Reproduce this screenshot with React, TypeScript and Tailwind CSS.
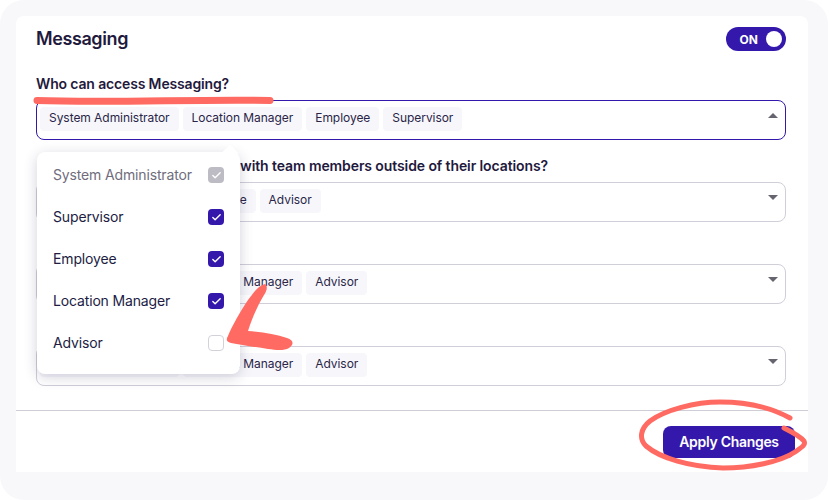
import { Check } from "lucide-react"

const font = { fontFamily: "Inter, sans-serif" }

type Field = { label?: string; chips: string[]; open?: boolean }

const fields: Field[] = [
  {
    label: "Who can access Messaging?",
    chips: ["System Administrator", "Location Manager", "Employee", "Supervisor"],
    open: true,
  },
  {
    chips: ["System Administrator", "Employee", "Advisor"],
  },
  {
    chips: ["System Administrator", "Location Manager", "Advisor"],
  },
  {
    chips: ["System Administrator", "Location Manager", "Advisor"],
  },
]

const options = [
  { name: "System Administrator", state: "disabled" },
  { name: "Supervisor", state: "checked" },
  { name: "Employee", state: "checked" },
  { name: "Location Manager", state: "checked" },
  { name: "Advisor", state: "empty" },
]

function Box({ state }: { state: string }) {
  if (state === "empty") {
    return <div className="size-4 rounded-[4px] border border-[#d3d1da] bg-white" />
  }
  return (
    <div
      className={
        state === "disabled"
          ? "size-4 rounded-[4px] bg-[#bdbbc3] flex items-center justify-center"
          : "size-4 rounded-[4px] bg-[#3418ab] flex items-center justify-center"
      }
    >
      <Check size={11} strokeWidth={3} className="text-white" />
    </div>
  )
}

function Popup() {
  return (
    <div className="absolute z-10 left-[1px] top-[52px] w-[203px] h-[222px] bg-white rounded-lg shadow-[0_3px_14px_rgba(35,30,80,0.2)] pt-[2px] px-4">
      <div className="absolute -top-[5px] right-1 size-3 rotate-45 bg-white" />
      {options.map((o) => (
        <div key={o.name} className="relative h-[42px] flex items-center justify-between">
          <span
            className={
              o.state === "disabled"
                ? "text-sm tracking-[-0.15px] text-[#6f6d7d]"
                : "text-sm tracking-[-0.15px] text-[#211c44]"
            }
          >
            {o.name}
          </span>
          <Box state={o.state} />
        </div>
      ))}
    </div>
  )
}

function Select({ field, index }: { field: Field; index: number }) {
  return (
    <div className="flex flex-col gap-[6px]">
      <p
        className={
          index === 1
            ? "h-5 pl-[204px] text-sm leading-5 tracking-[-0.1px] font-semibold text-[#1f1a3d]"
            : "h-5 text-sm leading-5 tracking-[-0.15px] font-semibold text-[#1f1a3d]"
        }
      >
        {index === 1 ? "with team members outside of their locations?" : field.label}
      </p>
      <div className="relative">
        <div
          className={
            field.open
              ? "h-10 rounded-lg border border-[#3418ab] px-[3px] pt-[6px] flex gap-1 items-start"
              : "h-10 rounded-lg border border-[#d0ced8] px-[3px] pt-[6px] flex gap-1 items-start"
          }
        >
          {field.chips.map((c) => (
            <span
              key={c}
              className="h-6 px-[9px] rounded bg-[#f7f7fb] text-xs leading-[22px] tracking-[-0.05px] text-[#2a2548]"
            >
              {c}
            </span>
          ))}
        </div>
        <svg width="10" height="5" viewBox="0 0 10 5" className="absolute right-[8px] top-[13px]">
          <path d={field.open ? "M5 0 L10 5 L0 5 Z" : "M0 0 L10 0 L5 5 Z"} fill="#66646f" />
        </svg>
        {field.open && <Popup />}
      </div>
    </div>
  )
}

export default function App() {
  return (
    <div className="relative w-[829px] h-[501px] bg-white" style={font}>
      <div className="w-[828px] h-[500px] rounded-[24px] bg-[#f8f8fb] pt-4 pl-4 pr-5 pb-7">
        <div className="h-full rounded-t-lg bg-white flex flex-col">
          <div className="pl-5 pr-[22px] pt-[11px] flex flex-col gap-4 h-[394px]">
            <div className="h-6 flex items-center justify-between mb-[7px]">
              <h1 className="text-lg tracking-[-0.4px] font-semibold text-[#1f1a3d]">Messaging</h1>
              <div className="w-[60px] h-6 rounded-full bg-[#3418ab] flex items-center justify-end gap-2 pr-1">
                <span className="text-xs pt-px font-bold text-white">ON</span>
                <div className="size-4 rounded-full bg-white" />
              </div>
            </div>
            {fields.map((f, i) => (
              <Select key={i} field={f} index={i} />
            ))}
          </div>
          <div className="border-t border-[#cfcdd6] pt-[15px] pr-[13px] flex justify-end">
            <button className="w-[132px] h-8 rounded-lg bg-[#3418ab] text-sm tracking-[-0.3px] font-semibold text-white">
              Apply Changes
            </button>
          </div>
        </div>
      </div>

      {/* hand drawn marks on top of the screenshot */}
      <svg width="829" height="501" viewBox="0 0 829 501" className="absolute inset-0 z-20 pointer-events-none">
        <path d="M37 100.5 C110 103 200 99 270 100.5" fill="none" stroke="#ff6b63" strokeWidth="7" strokeLinecap="round" />
        <path
          d="M265 284 C268 286 267 291 264 295 C258 305 252 318 248 331 C262 332 276 334 287 338 C294 340 294 345 289 348 C284 351 276 350 268 349 C255 347 241 345 231 343 C226 342 226 339 228 336 C232 326 240 312 248 300 C253 293 259 285 265 284 Z"
          fill="#ff6b63"
        />
        <path
          d="M790 418 C770 407 745 402 720 402 C695 402 665 410 650 421 C640 429 639 439 646 446 C660 458 690 467 723 468 C750 468 780 462 795 452 C802 447 806 445 804 441 C800 436 790 431 784 428"
          fill="none"
          stroke="#ff6b63"
          strokeWidth="5"
          strokeLinecap="round"
        />
      </svg>
    </div>
  )
}
